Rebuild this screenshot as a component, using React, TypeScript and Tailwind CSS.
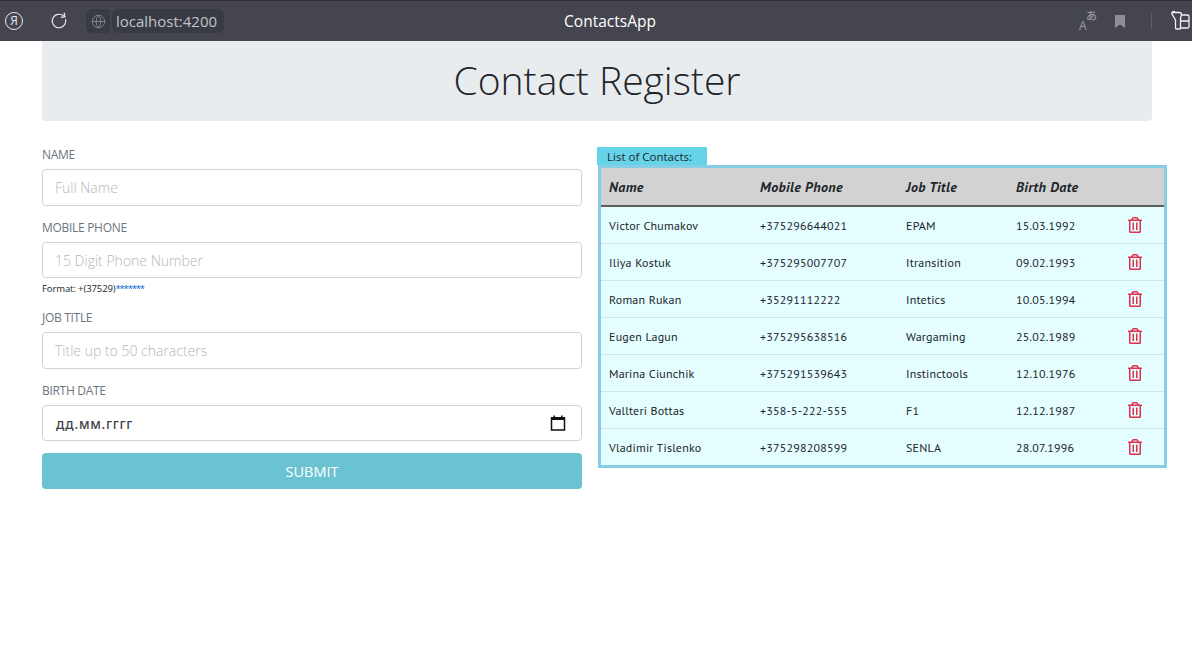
import React from 'react';
import { Globe, RotateCw } from 'lucide-react';
import { FaRegTrashAlt } from 'react-icons/fa';

const contacts = [
  ['Victor Chumakov', '+375296644021', 'EPAM', '15.03.1992'],
  ['Iliya Kostuk', '+375295007707', 'Itransition', '09.02.1993'],
  ['Roman Rukan', '+35291112222', 'Intetics', '10.05.1994'],
  ['Eugen Lagun', '+375295638516', 'Wargaming', '25.02.1989'],
  ['Marina Ciunchik', '+375291539643', 'Instinctools', '12.10.1976'],
  ['Vallteri Bottas', '+358-5-222-555', 'F1', '12.12.1987'],
  ['Vladimir Tislenko', '+375298208599', 'SENLA', '28.07.1996'],
];

const BrowserBar = () => (
  <div className="h-[41px] bg-[#45454f] border-t border-[#2f2f37] flex items-center relative text-white shrink-0">
    <div className="w-[18px] h-[18px] ml-[5px] rounded-full border-[1.5px] border-[#e8e8ea] flex items-center justify-center text-[12px] leading-none text-[#e8e8ea]">Я</div>
    <RotateCw className="w-[18px] h-[18px] ml-[27px] text-[#e8e8ea] -rotate-12" strokeWidth={1.6} />
    <div className="ml-[18px] w-[24px] h-[24px] rounded-l-md rounded-r-sm bg-[#383a44] flex items-center justify-center">
      <Globe className="w-[15px] h-[15px] text-[#85868c]" strokeWidth={1.5} />
    </div>
    <div className="ml-[2px] h-[24px] w-[112px] rounded-md bg-[#383a44] flex items-center pl-[4px] text-[15px] text-[#c2c3c7]">localhost:4200</div>
    <div className="absolute inset-x-0 pl-[28px] pt-px text-center text-[15.5px] text-white">ContactsApp</div>
    <div className="ml-auto flex items-center">
      <div className="relative w-[18px] h-[18px] text-[#9a9ba1]">
        <span className="absolute left-0 bottom-[-2px] text-[12px] leading-none">A</span>
        <span className="absolute right-0 top-[-2px] text-[11px] font-medium leading-none font-['Noto_Sans_CJK_JP',sans-serif]">あ</span>
      </div>
      <svg className="ml-[18px] w-[10px] h-[13px]" viewBox="0 0 10 13"><path d="M0 0h10v13L5 9.500 0 13z" fill="#8e8f95" /></svg>
      <div className="ml-[26px] w-px h-[16px] bg-[#5d5d66]" />
      <svg className="ml-[18px] mr-[2px] w-[20px] h-[20px]" viewBox="0 0 20 20" fill="none" stroke="#f2f2f3" strokeWidth="1.300">
        <path d="M3 1.500h6.500a2 2 0 0 1 2 2l-1 4v9.500a1 1 0 0 1-1 1h-3a1 1 0 0 1-1-1v-8l-3-5a2 2 0 0 1 1.500-3.500z" />
        <path d="M11.500 4h6a1.500 1.500 0 0 1 1.500 1.500v10a1.500 1.500 0 0 1-1.500 1.500h-7M11 10h8" />
      </svg>
    </div>
  </div>
);

const inputClass = 'w-full border border-[#ced4da] rounded-[4px] px-3 text-[14px] font-light outline-none placeholder:text-[#b4b8bc] bg-white';
const labelClass = 'block h-[18px] mb-[5px] text-[12px] tracking-[-0.3px] leading-[18px] uppercase text-[#6c757d]';

const ContactForm = () => (
  <form className="w-[540px] pt-[25px] shrink-0">
    <label className={labelClass}>Name</label>
    <input className={inputClass + ' h-[37px]'} placeholder="Full Name" />
    <label className={labelClass + ' mt-[13px]'}>Mobile Phone</label>
    <input className={inputClass + ' h-[36px]'} placeholder="15 Digit Phone Number" />
    <p className="h-[12px] mt-[4px] pt-px text-[9.5px] tracking-[-0.1px] leading-[12px] text-[#212529]">
      Format: +(37529)<span className="text-[#0069d9] tracking-[-1.2px]">*******</span>
    </p>
    <label className={labelClass + ' mt-[15px]'}>Job Title</label>
    <input className={inputClass + ' h-[37px]'} placeholder="Title up to 50 characters" />
    <label className={labelClass + ' mt-[13px]'}>Birth Date</label>
    <div className="h-[36px] border border-[#ced4da] rounded-[4px] pl-[13px] pr-[15px] flex items-center justify-between">
      <span className="pt-[2px] text-[13.5px] font-medium tracking-[0.7px] text-[#3f444a] font-['Noto_Sans',sans-serif]">дд.мм.гггг</span>
      <svg className="w-[16px] h-[16px]" viewBox="0 0 16 16" fill="none">
        <path d="M1.500 3h13v12h-13z" stroke="#111" strokeWidth="1.500" />
        <path d="M1 2h14v3H1zM3.500 0.500h1.500v2h-1.500zM11 0.500h1.500v2H11z" fill="#111" />
      </svg>
    </div>
    <button type="button" className="mt-[12px] pt-px w-full h-[36px] rounded-[4px] bg-[#6bc3d2] text-white text-[14.5px] uppercase">Submit</button>
  </form>
);

const ContactList = () => (
  <div className="ml-[15px] pt-[26px] w-[570px] shrink-0">
    <div className="w-[110px] h-[18px] bg-[#66d3e8] pl-[10px] pt-px text-[11.5px] leading-[18px] text-[#212529]">List of Contacts:</div>
    <div className="ml-px w-[569px] border-[3px] border-[#87cde6] bg-[#e4fdff] font-['PT_Sans','Noto_Sans',sans-serif]">
      <table className="w-full table-fixed border-collapse text-[12px] tracking-[0.2px] text-[#212529]">
        <thead>
          <tr className="h-[38px] bg-[#d2d2d2] border-b-2 border-[#5f5f5f] text-left text-[14px] tracking-[0.4px] font-bold italic">
            <th className="w-[151px] pl-[8px] pt-px">Name</th>
            <th className="w-[146px] pl-[8px] pt-px">Mobile Phone</th>
            <th className="w-[110px] pl-[8px] pt-px">Job Title</th>
            <th className="w-[111px] pl-[8px] pt-px">Birth Date</th>
            <th />
          </tr>
        </thead>
        <tbody>
          {contacts.map((c, i) => (
            <tr key={c[0]} className={'h-[37px]' + (i > 0 ? ' border-t border-[#d5e3ea]' : '')}>
              <td className="pl-[8px] pt-[3px]">{c[0]}</td>
              <td className="pl-[8px] pt-[3px]">{c[1]}</td>
              <td className="pl-[8px] pt-[3px]">{c[2]}</td>
              <td className="pl-[8px] pt-[3px]">{c[3]}</td>
              <td className="pl-[9px]"><FaRegTrashAlt className="w-[14px] h-[16px] text-[#e0304f]" /></td>
            </tr>
          ))}
        </tbody>
      </table>
    </div>
  </div>
);

export default function App() {
  return (
    <div className="h-[652px] bg-white font-['Open_Sans','Noto_Sans',sans-serif] overflow-hidden flex flex-col">
      <BrowserBar />
      <div className="mx-[42px] w-[1110px] h-[80px] pb-px bg-[#e9ecef] rounded-b-[4px] flex items-center justify-center text-[39px] font-light text-[#212529] shrink-0">
        Contact Register
      </div>
      <div className="ml-[42px] flex">
        <ContactForm />
        <ContactList />
      </div>
    </div>
  );
}
